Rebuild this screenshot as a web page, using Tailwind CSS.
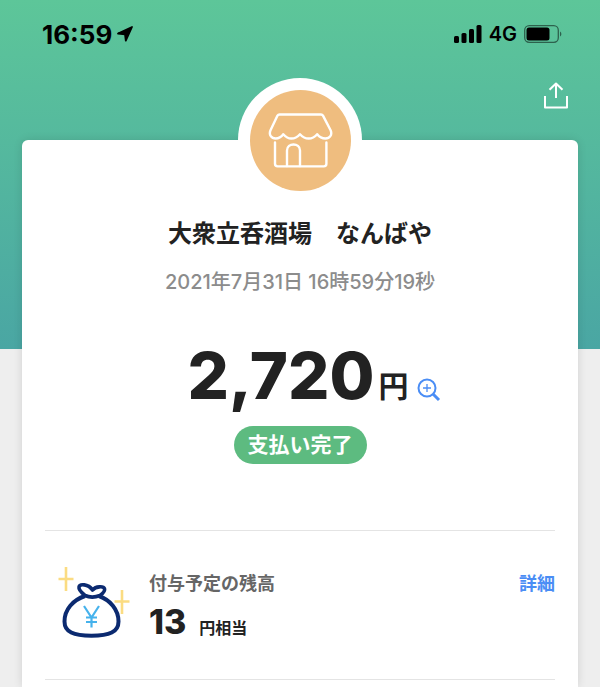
<!DOCTYPE html>
<html lang="ja">
<head>
  <meta charset="UTF-8" />
  <meta name="viewport" content="width=device-width, initial-scale=1.0" />
  <title>支払い完了</title>
  <script src="https://cdn.jsdelivr.net/npm/@tailwindcss/browser@4"></script>
</head>
<body class="min-h-screen bg-[#eeeeee] font-['Inter','Noto_Sans_CJK_JP',sans-serif] text-[#222222]">
  <div class="relative isolate flex min-h-screen flex-col overflow-hidden">
    <div class="absolute inset-x-0 top-0 -z-10 h-[349px] bg-linear-to-b from-[#5dc699] to-[#4aa6a3]"></div>

    <!-- status bar -->
    <header class="flex h-[68px] items-center justify-between pr-[38px] pl-[42px] text-black">
      <div class="flex items-center gap-1">
        <span class="text-[26px] font-bold">16:59</span>
        <svg class="size-[18px]" viewBox="0 0 18 18" fill="currentColor" stroke="currentColor" stroke-linejoin="round" aria-hidden="true">
          <path d="M16 2L9.800 15.600 9 9.300 2 8.500z" stroke-width="1.800" />
        </svg>
      </div>
      <div class="flex items-center gap-[7px]">
        <svg class="h-[18px] w-7" viewBox="0 0 28 18" fill="currentColor" aria-hidden="true">
          <rect x="0" y="11" width="5" height="7" rx="1.500" />
          <rect x="7.500" y="8" width="5" height="10" rx="1.500" />
          <rect x="15" y="4" width="5" height="14" rx="1.500" />
          <rect x="22.500" y="0" width="5" height="18" rx="1.500" />
        </svg>
        <span class="text-xl font-semibold">4G</span>
        <svg class="h-[18px] w-[38px]" viewBox="0 0 38 18" aria-hidden="true">
          <rect x="0.700" y="0.700" width="33.600" height="16.600" rx="4.500" fill="none" stroke="#000" stroke-opacity="0.500" stroke-width="1.300" />
          <rect x="2.500" y="2.500" width="23" height="13" rx="2.500" fill="#000" />
          <path d="M36 6.500c1.800.8 1.800 4.200 0 5z" fill="#000" fill-opacity="0.500" />
        </svg>
      </div>
    </header>

    <div class="flex h-[72px] items-start justify-end pt-3 pr-8">
      <button type="button" aria-label="共有" class="text-white">
        <svg class="h-[30px] w-6" viewBox="0 0 24 30" fill="none" stroke="currentColor" stroke-width="2" stroke-linejoin="round" aria-hidden="true">
          <path d="M1 16v11.500h22V16M12 18V4M5.500 9.800L12 3.500l6.500 6.300" />
        </svg>
      </button>
    </div>

    <!-- receipt -->
    <main class="relative mx-[22px] flex grow flex-col rounded-t-md bg-white px-[23px] pt-[76px] shadow-[0_0_10px_rgba(0,0,0,0.12)]">
      <div class="absolute -top-[62px] left-1/2 flex size-[124px] -translate-x-1/2 items-center justify-center rounded-full bg-white">
        <div class="flex size-[101px] items-center justify-center rounded-full bg-[#efbd7f]">
          <svg class="h-[56px] w-[66px]" viewBox="0 0 66 56" fill="none" stroke="#fff" stroke-width="2.400" stroke-linejoin="round" stroke-linecap="round" aria-hidden="true">
            <path d="M12.500 2.500h41.500c.9 0 1.600.4 2 1.100l7.600 14.600c2 4.800-1 8.300-5.100 8.300-3.500 0-6.200-1.500-8.300-4.300-2.500 2.800-5 4.300-8.500 4.300s-6.200-1.500-8.700-4.300c-2.500 2.800-5.200 4.300-8.700 4.300s-5.500-1.500-8-4.300c-2.100 2.800-4.300 4.300-7.700 4.300-4.100 0-7.100-3.500-5.100-8.300L10.500 3.600c.4-.7 1.100-1.100 2-1.100z" />
            <path d="M8 30.500v21.300c0 1.700.9 2.600 2.600 2.600h46.200c1.700 0 2.600-.9 2.600-2.600V30.500" />
            <path d="M20 54V38.500c0-8 13-8 13 0V54" />
          </svg>
        </div>
      </div>

      <section class="flex flex-col items-center">
        <h1 class="text-2xl leading-9 font-bold">大衆立呑酒場　なんばや</h1>
        <p class="mt-4 text-xl leading-7 font-medium text-[#8c8c8c]">2021年7月31日 16時59分19秒</p>
        <div class="mt-12 flex items-end pl-7">
          <span class="text-[65px] leading-[64px] font-extrabold">2,720</span>
          <span class="mb-1.5 ml-1 text-3xl leading-8 font-bold">円</span>
          <button type="button" aria-label="金額を拡大" class="mb-1.5 ml-2 text-[#4a8df5]">
            <svg class="size-6" viewBox="0 0 24 24" fill="none" stroke="currentColor" aria-hidden="true">
              <circle cx="10" cy="10" r="8.500" stroke-width="2" />
              <path d="M10 6v8M6 10h8" stroke-width="1.300" />
              <path d="M16 16l6 6" stroke-width="3" />
            </svg>
          </button>
        </div>
        <p class="mt-[18px] rounded-full bg-[#5dbb80] px-[14px] py-[5px] text-[21px] leading-7 font-bold text-white">支払い完了</p>
      </section>

      <section class="mt-[66px] flex items-start gap-4 border-y border-[#e4e4e4] pt-[35px] pb-[37px] pl-3">
        <svg class="h-[76px] w-[76px] shrink-0" viewBox="0 0 76 76" fill="none" aria-hidden="true">
          <path d="M9 1v24M1.500 13h15M65 24v24M57.500 35.500h15" stroke="#fbdc82" stroke-width="2.600" />
          <path d="M28 30C16 34 7.500 43.500 7.500 55.500c0 10.500 9 14.300 27 14.300s27-3.800 27-14.300C61.500 43.500 53 34 42 30" stroke="#0b2a70" stroke-width="4" />
          <path d="M28 29.500c-3-2.500-6.500-6-6-8.500.6-3.200 9-3.500 13.500 3 3.500-4 11-4 12-1.300.8 2.300-2 5-4.500 6.800-4.500 1.800-11 1.800-15 0z" stroke="#0b2a70" stroke-width="3.600" stroke-linejoin="round" />
          <path d="M27 40l7.500 11.500L42 40M34.500 51v10.500M29 51.500h11M29 56h11" stroke="#46b2ec" stroke-width="2.200" />
        </svg>
        <div class="grow">
          <h2 class="text-lg leading-9 font-bold text-[#666666]">付与予定の残高</h2>
          <p class="flex items-baseline gap-[13px] leading-[40px]"><span class="text-[34px] font-extrabold">13</span><span class="text-base font-bold">円相当</span></p>
        </div>
        <a href="#" class="text-lg leading-9 font-bold text-[#4a8df5]">詳細</a>
      </section>
    </main>
  </div>
</body>
</html>
